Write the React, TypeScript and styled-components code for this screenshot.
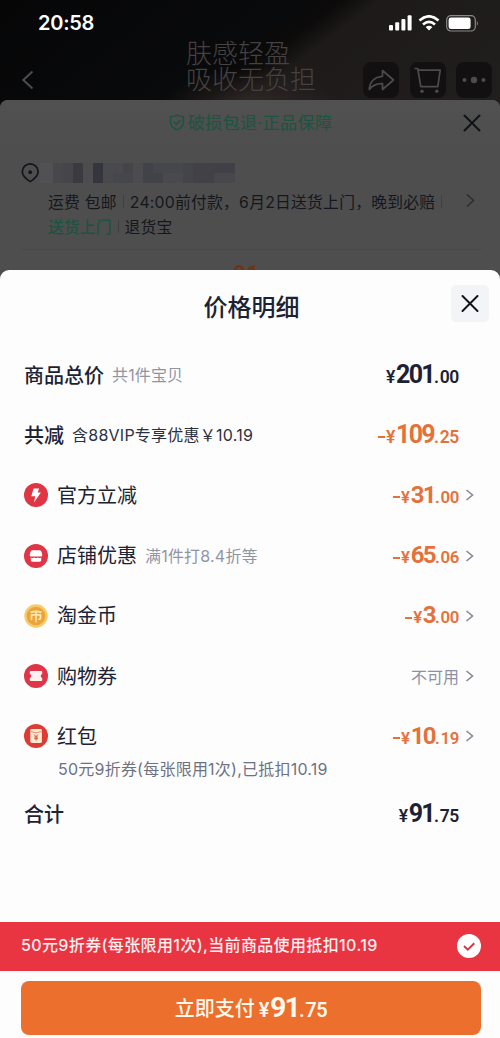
import React from "react";
import styled, { createGlobalStyle } from "styled-components";

const GlobalStyle = createGlobalStyle`
  * { box-sizing: border-box; }
  body {
    margin: 0;
    background: #fdfdfd;
    font-family: Inter, "Noto Sans CJK SC", sans-serif;
    color: #1c2233;
  }
`;

const Screen = styled.main`
  width: 500px;
  height: 1038px;
  display: flex;
  flex-direction: column;
  overflow: hidden;
  background: #fdfdfd;
`;

const Hero = styled.header`
  height: 109px;
  flex: none;
  display: flex;
  flex-direction: column;
  background:
    radial-gradient(ellipse 90px 40px at 250px 108px, rgba(52, 44, 43, 0.8), transparent),
    linear-gradient(143deg, #060607 0%, #090a0c 46%, #0c0a0a 53%, #1d1a19 59%, #211e1e 100%);
`;

const StatusBar = styled.div`
  height: 40px;
  flex: none;
  padding: 6px 21px 0 38px;
  display: flex;
  justify-content: space-between;
  align-items: center;
  color: #fff;
`;

const Clock = styled.span`
  font-size: 20px;
  line-height: 24px;
  font-weight: 600;
  letter-spacing: -0.25px;
`;

const StatusIcons = styled.div`
  display: flex;
  align-items: center;
  gap: 6px;
  svg { display: block; }
`;

const NavBar = styled.div`
  height: 60px;
  display: flex;
  align-items: flex-start;
  padding: 0 8px 0 21px;
`;

const BackButton = styled.div`
  width: 165px;
  padding-top: 30px;
  svg { display: block; }
`;

const Slogan = styled.p`
  margin: 1px 0 0;
  flex: 1;
  font-size: 26px;
  line-height: 26px;
  font-weight: 300;
  color: #464241;
  white-space: pre-line;
`;

const NavActions = styled.div`
  display: flex;
  gap: 10.5px;
  padding-top: 22px;
`;

const NavAction = styled.div`
  width: 36px;
  height: 36px;
  border-radius: 8px;
  background: #121010;
  svg { display: block; }
`;

const ProductCard = styled.section`
  height: 183px;
  flex: none;
  margin-top: -9px;
  border-radius: 8px 8px 0 0;
  background: #4e4e4e;
  color: #15171d;
`;

const Guarantee = styled.div`
  height: 45px;
  display: grid;
  grid-template-columns: 1fr auto 1fr;
  align-items: center;
  padding: 0 19px 0 20px;
  background: linear-gradient(#515151, #4e4e4e);
  border-radius: 8px 8px 0 0;
`;

const GuaranteeText = styled.div`
  display: flex;
  align-items: center;
  gap: 3px;
  font-size: 17.2px;
  line-height: 24px;
  letter-spacing: 0.25px;
  color: #1b5440;
`;

const CardClose = styled.div`
  justify-self: end;
  svg { display: block; }
`;

const Shipping = styled.div`
  height: 105px;
  margin: 0 18px 0 21px;
  padding-top: 18px;
  border-bottom: 1px solid #484848;
  display: flex;
`;

const PinBox = styled.div`
  width: 27px;
  svg { display: block; }
`;

const ShippingBody = styled.div`
  flex: 1;
`;

const Mosaic = styled.div`
  height: 20px;
  width: 195px;
  margin: 0 0 6px -8px;
  svg { display: block; }
`;

const ShippingLine = styled.div<{ $space?: number }>`
  display: flex;
  align-items: center;
  height: 25px;
  font-size: 15.8px;
  letter-spacing: ${(p) => p.$space ?? 0}px;
  white-space: pre;
`;

const Divider = styled.i`
  width: 1px;
  height: 13px;
  margin: 0 6px;
  background: #414144;
`;

const Green = styled.span`
  color: #1b5440;
  font-weight: 500;
`;

const ShippingArrow = styled.div`
  padding-top: 19px;
  svg { display: block; }
`;

const PricePeek = styled.div`
  height: 20px;
  margin: 14px 0 0 233px;
  font: 700 23px/22px Roboto, sans-serif;
  color: #6d3515;
`;

const Sheet = styled.section`
  flex: 1;
  margin-top: -13px;
  position: relative;
  border-radius: 9px 9px 0 0;
  background: #fdfdfd;
  display: flex;
  flex-direction: column;
`;

const SheetHeader = styled.div`
  height: 75px;
  padding: 15px 11px 0 14px;
  display: grid;
  grid-template-columns: 38px 1fr 38px;
  align-items: start;
`;

const SheetTitle = styled.h1`
  grid-column: 2;
  margin: 0;
  height: 48px;
  line-height: 46px;
  text-align: center;
  font-size: 24px;
  font-weight: 500;
`;

const SheetClose = styled.div`
  width: 38px;
  height: 37px;
  border-radius: 5px;
  background: #f3f4f8;
  svg { display: block; }
`;

const Rows = styled.div`
  padding: 0 24px;
`;

const Row = styled.div<{ $h?: number; $arrow?: boolean }>`
  height: ${(p) => p.$h ?? 60.2}px;
  padding-right: ${(p) => (p.$arrow ? 0 : 17)}px;
  display: flex;
  align-items: center;
  white-space: nowrap;
`;

const RowIcon = styled.span`
  width: 24px;
  height: 24px;
  margin-right: 9px;
  svg { display: block; }
`;

const Label = styled.span<{ $strong?: boolean }>`
  font-size: 20px;
  line-height: 30px;
  padding-top: 1px;
  font-weight: ${(p) => (p.$strong ? 500 : 400)};
`;

const Note = styled.span<{ $dark?: boolean; $space?: number }>`
  margin-left: 8px;
  font-size: 16px;
  line-height: 24px;
  letter-spacing: ${(p) => p.$space ?? 0}px;
  color: ${(p) => (p.$dark ? "#2b3040" : "#9095a4")};
`;

const Amount = styled.span<{ $tone?: string; $size?: number }>`
  margin-left: auto;
  padding-top: 1px;
  display: inline-flex;
  align-items: baseline;
  font-family: Roboto, sans-serif;
  font-weight: 700;
  line-height: 30px;
  color: ${(p) => p.$tone ?? "#1c2233"};
  font-size: ${(p) => p.$size ?? 25}px;
`;

const Whole = styled.span`
  margin-left: 1px;
  letter-spacing: -0.065em;
`;

const Small = styled.span`
  font-size: 0.7em;
  font-weight: 600;
  letter-spacing: -0.02em;
`;

const Dot = styled(Small)`
  margin: 0 1px 0 0;
`;

const Minus = styled.i`
  align-self: center;
  width: 7px;
  height: 2px;
  margin: 3px 1px 0 0;
  background: currentColor;
`;

const Unavailable = styled.span`
  margin-left: auto;
  font-size: 16px;
  color: #8b91a2;
`;

const RowArrow = styled.span`
  width: 17px;
  padding-left: 6px;
  svg { display: block; }
`;

const Detail = styled.div`
  height: 24px;
  margin: -9px 0 0 34px;
  font-size: 16px;
  line-height: 24px;
  letter-spacing: 0.23px;
  color: #6d7283;
`;

const CouponBar = styled.div`
  height: 49px;
  margin-top: auto;
  padding: 0 19px 2px 21px;
  display: flex;
  align-items: center;
  justify-content: space-between;
  background: #e93442;
  svg { display: block; }
`;

const CouponText = styled.span`
  padding-bottom: 2px;
  color: #fff0f0;
  font-size: 16px;
  line-height: 24px;
  font-weight: 500;
  letter-spacing: 0.37px;
`;

const Footer = styled.div`
  height: 67px;
  padding: 10px 19px 3px 21px;
`;

const PayButton = styled.button`
  width: 100%;
  height: 54px;
  padding: 2px 0 0;
  border: 0;
  border-radius: 8px;
  display: flex;
  align-items: center;
  justify-content: center;
  gap: 4px;
  background: #ec6f2d;
  color: #fff8ec;
  font: 500 20px/30px Inter, "Noto Sans CJK SC", sans-serif;
`;

const PayAmount = styled(Amount)`
  margin-left: 0;
  padding-top: 0;
`;

const ORANGE = "#e5713a";

type PriceProps = { whole: string; cents: string; minus?: boolean; size?: number };

const PriceParts = ({ whole, cents, minus }: PriceProps) => (
  <>
    {minus && <Minus />}
    <Small>¥</Small>
    <Whole>{whole}</Whole>
    <Dot>.</Dot>
    <Small>{cents}</Small>
  </>
);

const Price = (p: PriceProps) => (
  <Amount $tone={p.minus ? ORANGE : undefined} $size={p.size}>
    <PriceParts {...p} />
  </Amount>
);

const Arrow = () => (
  <RowArrow>
    <svg width="10" height="14" viewBox="0 0 10 14" fill="none" stroke="#858994" strokeWidth="1.6">
      <path d="M1.5 2 7.5 7l-6 5" />
    </svg>
  </RowArrow>
);

const Cross = ({ size, w }: { size: number; w: number }) => (
  <svg width={size} height={size} viewBox={`0 0 ${size} ${size}`} stroke="#11131a" strokeWidth={w} strokeLinecap="round">
    <path d={`M1.5 1.5 ${size - 1.5} ${size - 1.5}M${size - 1.5} 1.5 1.5 ${size - 1.5}`} />
  </svg>
);

const BoltIcon = () => (
  <svg width="24" height="24" viewBox="0 0 24 24">
    <circle cx="12" cy="12" r="12" fill="#df3545" />
    <path d="M9.6 5.4h5.5l-1.3 4.2h3.1L10 19.4l1.2-6.2H7.3z" fill="#fff" />
  </svg>
);

const ShopIcon = () => (
  <svg width="24" height="24" viewBox="0 0 24 24">
    <circle cx="12" cy="12" r="12" fill="#df3545" />
    <path d="M8.4 6.3h7.2q1.5 0 1.9 1.5l.8 3.1q.2 1.5-1.5 1.5H7.2q-1.7 0-1.5-1.5l.8-3.1q.4-1.5 1.9-1.5z" fill="#fff" />
    <path d="M6.8 13.5c1 .8 2.3.8 3.4 0 1.1.8 2.5.8 3.6 0 1.1.8 2.4.8 3.4 0v2.8q0 1.4-1.4 1.4H8.2q-1.4 0-1.4-1.4z" fill="#fff" />
  </svg>
);

const CoinIcon = () => (
  <svg width="24" height="24" viewBox="0 0 24 24">
    <circle cx="12" cy="12" r="11.7" fill="#f7cb6b" />
    <circle cx="12" cy="12" r="9.3" fill="#eca43a" />
    <path d="M7.2 8.1q4.8-1.3 9.6 0M12 7.8v9.8M7.5 15.3v-4.5h9v3.400q0 1-1.400 1" fill="none" stroke="#ffe7ae" strokeWidth="1.700" strokeLinecap="round" strokeLinejoin="round" />
  </svg>
);

const TicketIcon = () => (
  <svg width="24" height="24" viewBox="0 0 24 24">
    <circle cx="12" cy="12" r="12" fill="#df3549" />
    <path d="M6.500 7h11q.7 0 .7.7v2.200q-1.500.4-1.500 2.100t1.500 2.100v2.200q0 .7-.7.7h-11q-.7 0-.7-.7v-2.200q1.500-.4 1.500-2.100t-1.500-2.100V7.700q0-.7.7-.7z" fill="#fff1ee" />
  </svg>
);

const PacketIcon = () => (
  <svg width="24" height="24" viewBox="0 0 24 24">
    <circle cx="12" cy="12" r="12" fill="#dc3c34" />
    <rect x="6.300" y="5" width="11.600" height="14" rx="1.400" fill="#fdebcf" />
    <path d="M6.500 7.600q5.600 2.400 11.200 0" fill="none" stroke="#e58a6e" strokeWidth="1" />
    <path d="M10.200 10.500l1.900 2.200 1.900-2.200M12.100 12.700v3.700M10.200 13h3.800M10.200 14.700h3.800" fill="none" stroke="#d8553f" strokeWidth="1" />
  </svg>
);

const blocks = [
  ["#515154", 13], ["#48484c", 10], ["#46464a", 10], ["#3a3a40", 10], ["#4d4d50", 10],
  ["#35353d", 10], ["#4a4a4e", 20], ["#444449", 10], ["#4b4b50", 10], ["#424249", 20],
  ["#49494e", 20], ["#444449", 10], ["#414147", 21], ["#48484c", 21],
] as const;

const MosaicStrip = () => {
  let x = 0;
  return (
    <svg width="195" height="20" shapeRendering="crispEdges">
      {blocks.map(([c, w], i) => {
        const at = x;
        x += w;
        return <rect key={i} x={at} width={w} height="20" fill={c} />;
      })}
      <path d="M73 10h20v10H73zM113 0h30v10h-30z" fill="#46464d" />
      <path d="M174 0h21v10h-21z" fill="#404046" />
    </svg>
  );
};

export default function App() {
  return (
    <>
      <GlobalStyle />
      <Screen>
        <Hero>
          <StatusBar>
            <Clock>20:58</Clock>
            <StatusIcons>
              <svg width="23" height="16" viewBox="0 0 23 16" fill="#fff">
                <rect x="0" y="10" width="4" height="5.500" rx="1" />
                <rect x="6.200" y="7.300" width="4" height="8.200" rx="1" />
                <rect x="12.400" y="3.900" width="4" height="11.600" rx="1" />
                <rect x="18.600" y="0.300" width="4" height="15.200" rx="1" />
              </svg>
              <svg width="22" height="16" viewBox="0 0 22 16" fill="none" stroke="#fff" strokeWidth="2.600">
                <path d="M1.500 5.500q9.500-8.400 19 0M5 9.400q6-5.200 12 0" />
                <path d="M7.600 12.100q3.400-2.800 6.800 0L11 15.600z" fill="#fff" stroke="none" />
              </svg>
              <svg width="33" height="17" viewBox="0 0 33 17" fill="none">
                <rect x=".7" y=".7" width="28.600" height="15.300" rx="4.200" stroke="#8a8888" strokeWidth="1.200" />
                <rect x="2.600" y="2.600" width="22" height="11.500" rx="2.400" fill="#fff" />
                <path d="M30.800 5.700q2 2.700 0 5.400z" fill="#8a8888" />
              </svg>
            </StatusIcons>
          </StatusBar>
          <NavBar>
            <BackButton>
              <svg width="14" height="20" viewBox="0 0 14 20" fill="none" stroke="#4e4d4d" strokeWidth="2">
                <path d="M11.500 1.500 2.300 10l9.200 8.500" />
              </svg>
            </BackButton>
            <Slogan>{"肤感轻盈\n吸收无负担"}</Slogan>
            <NavActions>
              <NavAction>
                <svg width="36" height="36" viewBox="0 0 36 36" fill="none" stroke="#4d4b4b" strokeWidth="1.700" strokeLinejoin="round">
                  <path d="M19.500 8.500 30.500 18l-11 9.500v-5.800c-6.500-.4-10 1.700-13.200 5.800.4-7.600 5.200-12.600 13.200-13.200z" />
                </svg>
              </NavAction>
              <NavAction>
                <svg width="36" height="36" viewBox="0 0 36 36" fill="none" stroke="#4d4b4b" strokeWidth="1.700" strokeLinejoin="round">
                  <path d="M4.500 6.500h3.200l3.100 18.200h17l2.400-16.500H8" />
                  <circle cx="12" cy="29.300" r="1.700" fill="#4d4b4b" stroke="none" />
                  <circle cx="26.800" cy="29.300" r="1.700" fill="#4d4b4b" stroke="none" />
                </svg>
              </NavAction>
              <NavAction>
                <svg width="36" height="36" viewBox="0 0 36 36" fill="#4d4b4b">
                  <circle cx="8.500" cy="18" r="2" />
                  <circle cx="18" cy="18" r="3.200" />
                  <circle cx="27.500" cy="18" r="2" />
                </svg>
              </NavAction>
            </NavActions>
          </NavBar>
        </Hero>

        <ProductCard>
          <Guarantee>
            <span />
            <GuaranteeText>
              <svg width="16" height="17" viewBox="0 0 16 17" fill="none" stroke="#1b5440" strokeWidth="1.500" strokeLinejoin="round">
                <path d="M8 1.200q3.200 1.600 6.400 1.600v6q0 4.400-6.400 7.100-6.400-2.700-6.400-7.100v-6q3.200 0 6.400-1.600z" />
                <path d="m4.900 8 2.400 2.600 4-4.300" />
              </svg>
              破损包退·正品保障
            </GuaranteeText>
            <CardClose><Cross size={18} w={2} /></CardClose>
          </Guarantee>
          <Shipping>
            <PinBox>
              <svg width="19" height="20" viewBox="0 0 19 20" fill="none" stroke="#14151a" strokeWidth="1.700">
                <path d="M9.200 18.600C5 16 1.300 13 1.300 8.800a7.900 7.900 0 0 1 15.800 0c0 4.200-3.700 7.200-7.900 9.800z" />
                <circle cx="9.200" cy="9.200" r="1.900" fill="#14151a" stroke="none" />
              </svg>
            </PinBox>
            <ShippingBody>
              <Mosaic><MosaicStrip /></Mosaic>
              <ShippingLine $space={0.23}>
                运费 包邮<Divider />24:00前付款，6月2日送货上门，晚到必赔<Divider />
              </ShippingLine>
              <ShippingLine $space={0.1}>
                <Green>送货上门</Green><Divider />退货宝
              </ShippingLine>
            </ShippingBody>
            <ShippingArrow>
              <svg width="16" height="36" viewBox="0 0 16 36" fill="none" stroke="#2a2b2f" strokeWidth="1.400">
                <path d="m1 12.500 6.500 6L1 24.500" />
              </svg>
            </ShippingArrow>
          </Shipping>
          <PricePeek>91</PricePeek>
        </ProductCard>

        <Sheet>
          <SheetHeader>
            <SheetTitle>价格明细</SheetTitle>
            <SheetClose>
              <svg width="38" height="37" viewBox="0 0 38 37" stroke="#11131a" strokeWidth="2" strokeLinecap="round">
                <path d="m11.500 11 15 15m0-15-15 15" />
              </svg>
            </SheetClose>
          </SheetHeader>
          <Rows>
            <Row>
              <Label $strong>商品总价</Label>
              <Note $space={0.15}>共1件宝贝</Note>
              <Price whole="201" cents="00" />
            </Row>
            <Row>
              <Label $strong>共减</Label>
              <Note $dark $space={0.25}>含88VIP专享优惠￥10.19</Note>
              <Price whole="109" cents="25" minus />
            </Row>
            <Row $arrow>
              <RowIcon><BoltIcon /></RowIcon>
              <Label>官方立减</Label>
              <Price whole="31" cents="00" minus size={24} />
              <Arrow />
            </Row>
            <Row $arrow>
              <RowIcon><ShopIcon /></RowIcon>
              <Label>店铺优惠</Label>
              <Note $space={0.2}>满1件打8.4折等</Note>
              <Price whole="65" cents="06" minus size={24} />
              <Arrow />
            </Row>
            <Row $arrow>
              <RowIcon><CoinIcon /></RowIcon>
              <Label>淘金币</Label>
              <Price whole="3" cents="00" minus size={24} />
              <Arrow />
            </Row>
            <Row $arrow>
              <RowIcon><TicketIcon /></RowIcon>
              <Label>购物券</Label>
              <Unavailable>不可用</Unavailable>
              <Arrow />
            </Row>
            <Row $arrow>
              <RowIcon><PacketIcon /></RowIcon>
              <Label>红包</Label>
              <Price whole="10" cents="19" minus size={24} />
              <Arrow />
            </Row>
            <Detail>50元9折券(每张限用1次),已抵扣10.19</Detail>
            <Row $h={67}>
              <Label $strong>合计</Label>
              <Price whole="91" cents="75" />
            </Row>
          </Rows>
          <CouponBar>
            <CouponText>50元9折券(每张限用1次),当前商品使用抵扣10.19</CouponText>
            <svg width="24" height="24" viewBox="0 0 24 24" fill="none">
              <circle cx="12" cy="12" r="12" fill="#fff" />
              <path d="m7 12 3.800 3.700 6.500-6.500" stroke="#dc3545" strokeWidth="2" />
            </svg>
          </CouponBar>
          <Footer>
            <PayButton>
              立即支付
              <PayAmount $tone="#fff8ec" $size={28.5}>
                <PriceParts whole="91" cents="75" />
              </PayAmount>
            </PayButton>
          </Footer>
        </Sheet>
      </Screen>
    </>
  );
}
